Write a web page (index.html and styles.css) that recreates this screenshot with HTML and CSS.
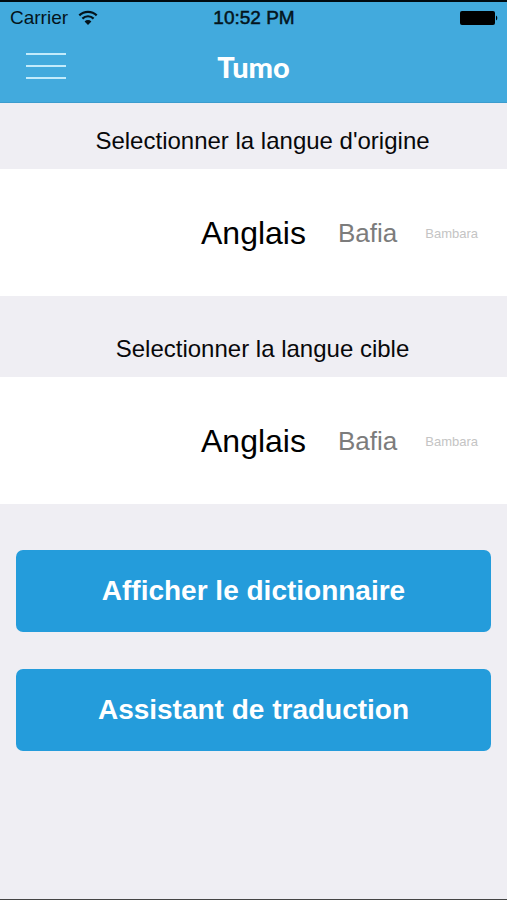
FILE: index.html
```
<!DOCTYPE html>
<html lang="fr">
<head>
	<meta charset="UTF-8">
	<meta name="viewport" content="width=device-width, initial-scale=1.0">
	<title>Tumo</title>
	<link rel="stylesheet" href="styles.css">
</head>
<body>
	<header>
		<div class="status-bar">
			<div class="carrier">
				<span>Carrier</span>
				<svg width="20" height="16" viewBox="0 0 20 16" aria-hidden="true">
					<path d="M1.3 5.4a12.3 12.3 0 0 1 17.4 0M4.4 8.6a7.9 7.9 0 0 1 11.2 0" fill="none" stroke="#04141c" stroke-width="2.2"/>
					<path d="M10 15l-3.4-3.6a4.8 4.8 0 0 1 6.8 0z" fill="#04141c"/>
				</svg>
			</div>
			<span class="time">10:52 PM</span>
			<svg class="battery" width="38" height="16" viewBox="0 0 38 16" aria-hidden="true">
				<rect x="0" y="1" width="35" height="14" rx="2"/>
				<path d="M36 5.5a3 3 0 0 1 0 5z"/>
			</svg>
		</div>
		<nav class="nav-bar">
			<button type="button" class="menu" aria-label="Menu">
				<span></span>
				<span></span>
				<span></span>
			</button>
			<h1>Tumo</h1>
		</nav>
	</header>

	<main>
		<form>
			<h2 id="titre-origine">Selectionner la langue d'origine</h2>
			<div class="picker" role="radiogroup" aria-labelledby="titre-origine">
				<label class="selected"><input type="radio" name="origine" value="anglais" checked>Anglais</label>
				<div class="next">
					<label class="near"><input type="radio" name="origine" value="bafia">Bafia</label>
					<label class="far"><input type="radio" name="origine" value="bambara">Bambara</label>
				</div>
			</div>

			<h2 id="titre-cible" class="spaced">Selectionner la langue cible</h2>
			<div class="picker" role="radiogroup" aria-labelledby="titre-cible">
				<label class="selected"><input type="radio" name="cible" value="anglais" checked>Anglais</label>
				<div class="next">
					<label class="near"><input type="radio" name="cible" value="bafia">Bafia</label>
					<label class="far"><input type="radio" name="cible" value="bambara">Bambara</label>
				</div>
			</div>

			<div class="actions">
				<button type="button">Afficher le dictionnaire</button>
				<button type="button">Assistant de traduction</button>
			</div>
		</form>
	</main>
</body>
</html>
```
FILE: styles.css
```
* {
	box-sizing: border-box;
}
body {
	margin: 0;
	min-height: 100vh;
	background-color: #efeef3;
	border-bottom: 1px solid #444;
	font-family: "Liberation Sans", Arial, sans-serif;
	color: #08080a;
}
header {
	background-color: #42aadd;
	border-top: 2px solid #000a10;
	border-bottom: 1px solid #3b9cce;
}

/* status bar */
.status-bar {
	display: grid;
	grid-template-columns: 1fr auto 1fr;
	align-items: center;
	height: 32px;
	padding: 0 9px 0 10px;
	font-size: 19px;
	color: #04141c;
}
.carrier {
	display: flex;
	align-items: center;
	gap: 10px;
}
.time {
	-webkit-text-stroke: 0.5px #04141c;
}
.battery {
	justify-self: end;
}

/* navigation bar */
.nav-bar {
	display: grid;
	grid-template-columns: 1fr auto 1fr;
	align-items: center;
	height: 68px;
	padding: 0 26px 4px;
}
.menu {
	display: flex;
	flex-direction: column;
	gap: 10px;
	width: 40px;
	padding: 0;
	border: none;
	background: none;
	cursor: pointer;
}
.menu span {
	width: 100%;
	height: 2px;
	background-color: #c3ebfb;
}
h1 {
	margin: 0;
	font-family: Lato, sans-serif;
	font-size: 29px;
	font-weight: 900;
	color: white;
}

/* language pickers */
h2 {
	margin: 0;
	padding: 24px 16px 14px 34px;
	font-size: 24px;
	font-weight: normal;
	line-height: 28px;
	text-align: center;
}
h2.spaced {
	padding-top: 39px;
}
.picker {
	display: grid;
	grid-template-columns: 1fr auto 1fr;
	align-items: center;
	height: 127px;
	padding-top: 2px;
	background-color: white;
	overflow: hidden;
}
.picker label {
	cursor: pointer;
}
.picker input {
	appearance: none;
	position: absolute;
	margin: 0;
}
.selected {
	grid-column: 2;
	font-size: 32px;
	color: black;
}
.next {
	display: flex;
	align-items: center;
	gap: 28px;
	padding-left: 32px;
}
.near {
	font-size: 26px;
	color: #7c7c7c;
}
.far {
	font-size: 13px;
	color: #c4c4c4;
}

/* buttons */
.actions {
	display: flex;
	flex-direction: column;
	gap: 37px;
	padding: 46px 16px;
}
.actions button {
	height: 82px;
	border: none;
	border-radius: 7px;
	background-color: #249cdb;
	font-family: inherit;
	font-size: 28px;
	font-weight: bold;
	color: white;
	cursor: pointer;
}
```
